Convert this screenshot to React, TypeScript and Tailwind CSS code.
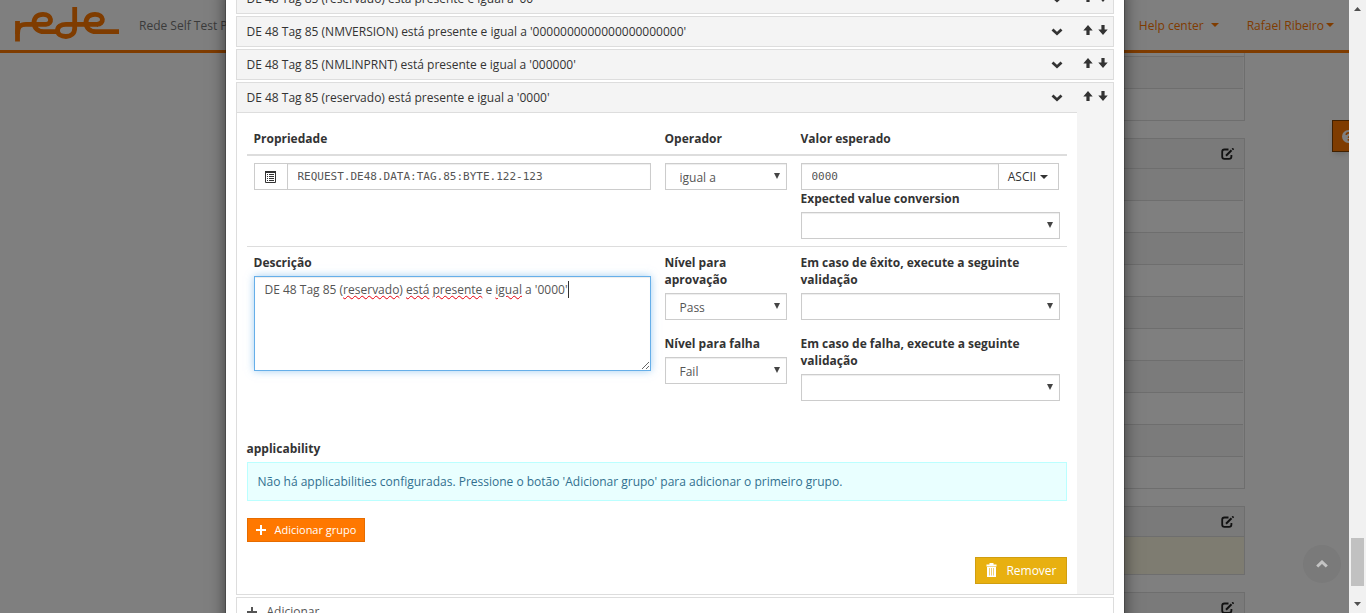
import type { ReactNode } from "react";

function Logo() {
  return (
    <svg viewBox="0 0 114 44" className="h-11 w-[114px]" fill="none" stroke="#ff7800" strokeWidth="4.800" role="img" aria-label="rede">
      <path d="M7.500 38.500V18" />
      <path d="M7.500 31C7.500 24 10 21.300 16 21.300H36C42.500 21.300 42.500 11.300 33 11.300C27 11.300 24 15 24 20C24 25 28 28.700 34 28.700H48" />
      <path d="M64.700 4V25C64.700 30.500 61 33.500 56 33.500C51 33.500 47.500 31 47.500 27.500C47.500 23.500 51 21.300 56 21.300H88" />
      <path d="M87 21.300C94.500 21.300 94.500 11.300 85 11.300C79 11.300 76 15 76 20C76 25 80 28.700 86 28.700H109" />
    </svg>
  );
}

function Chevron() {
  return (
    <svg viewBox="0 0 12 8" className="h-2 w-3" fill="none" stroke="#333" strokeWidth="2.800" aria-hidden="true">
      <path d="M1.500 1.500L6 5.700L10.500 1.500" />
    </svg>
  );
}

function Arrow({ down = false }: { down?: boolean }) {
  return (
    <svg viewBox="0 0 10 10" className={down ? "h-[10px] w-[10px] rotate-180" : "h-[10px] w-[10px]"} fill="#333" aria-hidden="true">
      <path d="M5 0L9.700 5.500H6.600V10H3.400V5.500H.3Z" />
    </svg>
  );
}

function Caret() {
  return (
    <svg viewBox="0 0 8 4" className="h-1 w-2" fill="currentColor" aria-hidden="true">
      <path d="M0 0H8L4 4Z" />
    </svg>
  );
}

function EditIcon() {
  return (
    <svg viewBox="0 0 13 12" className="h-3 w-[13px]" fill="none" stroke="#222" strokeWidth="1.800" aria-hidden="true">
      <path d="M7.500 1.500H3.500C2 1.500 1.200 2.300 1.200 3.800V8.500C1.200 10 2 10.900 3.500 10.900H8C9.500 10.900 10.400 10 10.400 8.500V7" />
      <path d="M5 7.800L10.500 2.200M11.300 1.500L12.500 .5" strokeWidth="2" />
    </svg>
  );
}

function Plus() {
  return (
    <svg viewBox="0 0 10 10" className="h-[10px] w-[10px]" stroke="currentColor" strokeWidth="2" aria-hidden="true">
      <path d="M5 0V10M0 5H10" />
    </svg>
  );
}

function BackgroundCard({ rows, tall = false, headless = false }: { rows: number; tall?: boolean; headless?: boolean }) {
  return (
    <section className="mb-[17px] border border-[#ddd] bg-white">
      {!headless && (
        <div className="flex h-[30px] items-center justify-end border-b border-[#ddd] bg-[#f4f4f4] pr-[10px]">
          <button type="button" aria-label="Editar"><EditIcon /></button>
        </div>
      )}
      {tall && <div className="h-[37px] bg-[#fcf8e3]" />}
      <div>
        {Array.from({ length: rows }, (_, i) => (
          <div key={i} className="mr-px h-8 border-b border-[#ddd] odd:bg-[#f6f6f6] even:bg-white last:h-[31px] last:border-b-0" />
        ))}
      </div>
    </section>
  );
}

function RuleItem({ title, children }: { title: string; children?: ReactNode }) {
  return (
    <section className="mb-0.5 flex border border-[#ddd] bg-[#f4f4f4]">
      <div className="min-w-0 flex-1">
        <h4>
          <button type="button" className="flex h-[29px] w-full items-center justify-between pr-[14px] pl-[10px] text-left">
            <span>{title}</span>
            <Chevron />
          </button>
        </h4>
        {children}
      </div>
      <div className="flex h-[29px] w-9 items-start gap-[5px] pt-2 pl-[6px]">
        <button type="button" aria-label="Mover para cima"><Arrow /></button>
        <button type="button" aria-label="Mover para baixo"><Arrow down /></button>
      </div>
    </section>
  );
}

const field = "h-[27px] border border-[#ccc] bg-white text-[#555] shadow-[inset_0_1px_1px_rgba(0,0,0,0.075)] outline-none";
const misspelt = "underline decoration-red-600 decoration-wavy decoration-1 underline-offset-1";

function Select({ id, label, value = "", hideLabel = false }: { id: string; label: string; value?: string; hideLabel?: boolean }) {
  return (
    <div>
      <label htmlFor={id} className={hideLabel ? "sr-only" : "mb-[5px] block font-bold"}>{label}</label>
      <div className="relative">
        <select id={id} defaultValue={value} className={`${field} block w-full appearance-none px-[14px] pt-[2px] leading-[17px]`}>
          <option value={value}>{value}</option>
        </select>
        <svg viewBox="0 0 6 6" className="pointer-events-none absolute top-[10px] right-[7px] h-1.5 w-1.5" fill="#444" aria-hidden="true">
          <path d="M0 0H6L3 6Z" />
        </svg>
      </div>
    </div>
  );
}

function RuleForm() {
  return (
    <div className="border-t border-[#ddd] bg-white p-[10px]">
      <table className="w-full table-fixed border-collapse text-left">
        <thead>
          <tr className="border-b-2 border-[#ddd]">
            <th className="w-[411px] p-[7px]">Propriedade</th>
            <th className="w-[136px] p-[7px]">Operador</th>
            <th className="p-[7px]">Valor esperado</th>
          </tr>
        </thead>
        <tbody className="align-top">
          <tr className="border-b border-[#ddd]">
            <td className="p-[7px]">
              <div className="flex">
                <button type="button" aria-label="Escolher propriedade" className="flex h-[27px] w-[33px] items-center justify-center border border-r-0 border-[#ccc]">
                  <svg viewBox="0 0 11 12" className="h-3 w-[11px]" stroke="#333" fill="none" aria-hidden="true">
                    <path d="M.5 .5V11.500H10.500V.5" />
                    <path d="M0 1H11" strokeWidth="2" />
                    <path d="M2 3.500H3M4 3.500H9M2 5.500H3M4 5.500H9M2 7.500H3M4 7.500H9M2 9.500H3M4 9.500H9" />
                  </svg>
                </button>
                <input aria-label="Propriedade" defaultValue="REQUEST.DE48.DATA:TAG.85:BYTE.122-123" className={`${field} min-w-0 flex-1 px-[10px] font-['DejaVu_Sans_Mono',monospace] text-[11px]`} />
              </div>
            </td>
            <td className="p-[7px]"><Select id="operator" label="Operador" value="igual a" hideLabel /></td>
            <td className="p-[7px]">
              <div className="mr-px flex">
                <input aria-label="Valor esperado" defaultValue="0000" className={`${field} min-w-0 flex-1 px-[10px] font-['DejaVu_Sans_Mono',monospace] text-[11px]`} />
                <button type="button" className="flex h-[27px] w-[60px] items-center justify-center gap-1 border border-l-0 border-[#ccc]">
                  ASCII <Caret />
                </button>
              </div>
              <Select id="conversion" label="Expected value conversion" />
            </td>
          </tr>
          <tr>
            <td className="p-[7px]">
              <label htmlFor="description" className="mb-[5px] block font-bold">Descrição</label>
              <div className="relative">
                <textarea
                  id="description"
                  spellCheck={false}
                  defaultValue="DE 48 Tag 85 (reservado) está presente e igual a '0000'"
                  className="block h-[95px] w-full resize-y border border-[#66afe9] px-[10px] py-1 text-[#555] shadow-[inset_0_1px_1px_rgba(0,0,0,0.075),0_0_8px_rgba(102,175,233,0.6)] outline-none"
                />
                <div aria-hidden="true" className="pointer-events-none absolute top-[5px] left-[11px] whitespace-pre text-transparent">
                  DE 48 Tag 85 (<span className={misspelt}>reservado</span>) <span className={misspelt}>está</span> <span className={misspelt}>presente</span> e <span className={misspelt}>igual</span> a '0000'<span className="inline-block h-[17px] w-px bg-[#333] align-top" />
                </div>
              </div>
            </td>
            <td className="p-[7px]">
              <div className="flex flex-col gap-[15px]">
                <Select id="pass-level" label="Nível para aprovação" value="Pass" />
                <Select id="fail-level" label="Nível para falha" value="Fail" />
              </div>
            </td>
            <td className="p-[7px]">
              <div className="flex flex-col gap-[15px]">
                <Select id="on-success" label="Em caso de êxito, execute a seguinte validação" />
                <Select id="on-failure" label="Em caso de falha, execute a seguinte validação" />
              </div>
            </td>
          </tr>
        </tbody>
      </table>
      <h5 className="mt-8 mb-[5px] font-bold">applicability</h5>
      <p className="mb-[17px] border border-[#bff] bg-[#e9ffff] p-[10px] text-[#31708f]">
        Não há applicabilities configuradas. Pressione o botão 'Adicionar grupo' para adicionar o primeiro grupo.
      </p>
      <button type="button" className="flex h-6 items-center gap-[9px] border border-[#e66c00] bg-[#ff7800] px-2 pb-px text-[11px] font-medium text-white">
        <Plus /> Adicionar grupo
      </button>
      <div className="mt-[15px] flex justify-end">
        <button type="button" className="flex h-[27px] items-center gap-[9px] border border-[#d09e10] bg-[#e8b010] pr-[9px] pl-[10px] font-medium text-white">
          <svg viewBox="0 0 11 16" className="h-4 w-[11px]" fill="#fff" aria-hidden="true">
            <path d="M3.500 0H7.500V1.500H10.500V3.500H.5V1.500H3.500Z" />
            <path d="M1 4H10V14H1Z" />
            <path d="M3.500 5V12.500M5.500 5V12.500M7.500 5V12.500" stroke="#e8b010" strokeWidth=".6" />
          </svg>
          Remover
        </button>
      </div>
    </div>
  );
}

export default function App() {
  return (
    <div className="flex h-screen overflow-hidden bg-white font-['Open_Sans','Noto_Sans',sans-serif] text-[12px] leading-[17px] text-[#333]">
      <div className="relative min-w-0 flex-1 overflow-hidden">
        <header className="flex h-[53px] items-center border-b-[3px] border-[#ff7800] pr-[15px] pl-[10px]">
          <Logo />
          <span className="ml-[15px] text-[#777]">Rede Self Test P</span>
          <nav className="ml-auto flex gap-7 text-[#ff7800]">
            <a href="#help" className="flex items-center gap-[7px]">Help center <Caret /></a>
            <a href="#user" className="flex items-center gap-0.5">Rafael Ribeiro <Caret /></a>
          </nav>
        </header>
        <main className="mx-auto max-w-[1140px]">
          <div className="ml-auto w-3/4">
            <div className="h-[3px] border-r border-[#ddd]" />
            <BackgroundCard rows={2} headless />
            <BackgroundCard rows={10} />
            <BackgroundCard rows={0} tall />
            <BackgroundCard rows={2} />
          </div>
        </main>
        <button type="button" aria-label="Ajuda" className="absolute top-[120px] right-0 flex h-8 w-[17px] items-center overflow-hidden border border-r-0 border-[#804000] bg-[#ff7800] pl-[9px] shadow-md">
          <svg viewBox="0 0 13 13" className="h-[13px] w-[13px] shrink-0" fill="#fff" aria-hidden="true">
            <circle cx="6.500" cy="6.500" r="6.500" />
            <path d="M4.300 5C4.300 2.200 8.700 2.200 8.700 4.800C8.700 6.400 6.500 6.300 6.500 8M6.500 9V10.700" fill="none" stroke="#ff7800" strokeWidth="1.700" />
          </svg>
        </button>

        <div className="absolute inset-0 bg-black/50" />

        <button type="button" aria-label="Voltar ao topo" className="absolute right-2 bottom-[30px] flex h-[38px] w-[38px] items-center justify-center rounded-full bg-[#7a7a7a]">
          <svg viewBox="0 0 12 8" className="h-2 w-3" fill="none" stroke="#c4c4c4" strokeWidth="3" aria-hidden="true">
            <path d="M1.200 6.500L6 2L10.800 6.500" />
          </svg>
        </button>

        <div role="dialog" className="pointer-events-none absolute inset-0 overflow-hidden">
          <div className="pointer-events-auto mx-auto -mt-[17px] min-h-[660px] max-w-[900px] border-x border-black/20 bg-white bg-clip-padding px-[10px] shadow-[0_5px_15px_rgba(0,0,0,0.5)]">
            <RuleItem title="DE 48 Tag 85 (reservado) está presente e igual a '00'" />
            <RuleItem title="DE 48 Tag 85 (NMVERSION) está presente e igual a '0000000000000000000000'" />
            <RuleItem title="DE 48 Tag 85 (NMLINPRNT) está presente e igual a '000000'" />
            <RuleItem title="DE 48 Tag 85 (reservado) está presente e igual a '0000'">
              <RuleForm />
            </RuleItem>
            <button type="button" className="flex h-[29px] w-full items-center gap-[10px] border border-[#ddd] px-[10px] text-[#555]">
              <Plus /> Adicionar
            </button>
          </div>
        </div>
      </div>

      <div aria-hidden="true" className="flex w-[17px] flex-col items-center justify-between bg-[#f1f1f1] py-[7px]">
        <svg viewBox="0 0 7 4" className="h-1 w-[7px]" fill="#505050"><path d="M0 4H7L3.500 0Z" /></svg>
        <div className="mt-auto mb-4 h-12 w-[13px] bg-[#c1c1c1]" />
        <svg viewBox="0 0 7 4" className="h-1 w-[7px]" fill="#505050"><path d="M0 0H7L3.500 4Z" /></svg>
      </div>
    </div>
  );
}
